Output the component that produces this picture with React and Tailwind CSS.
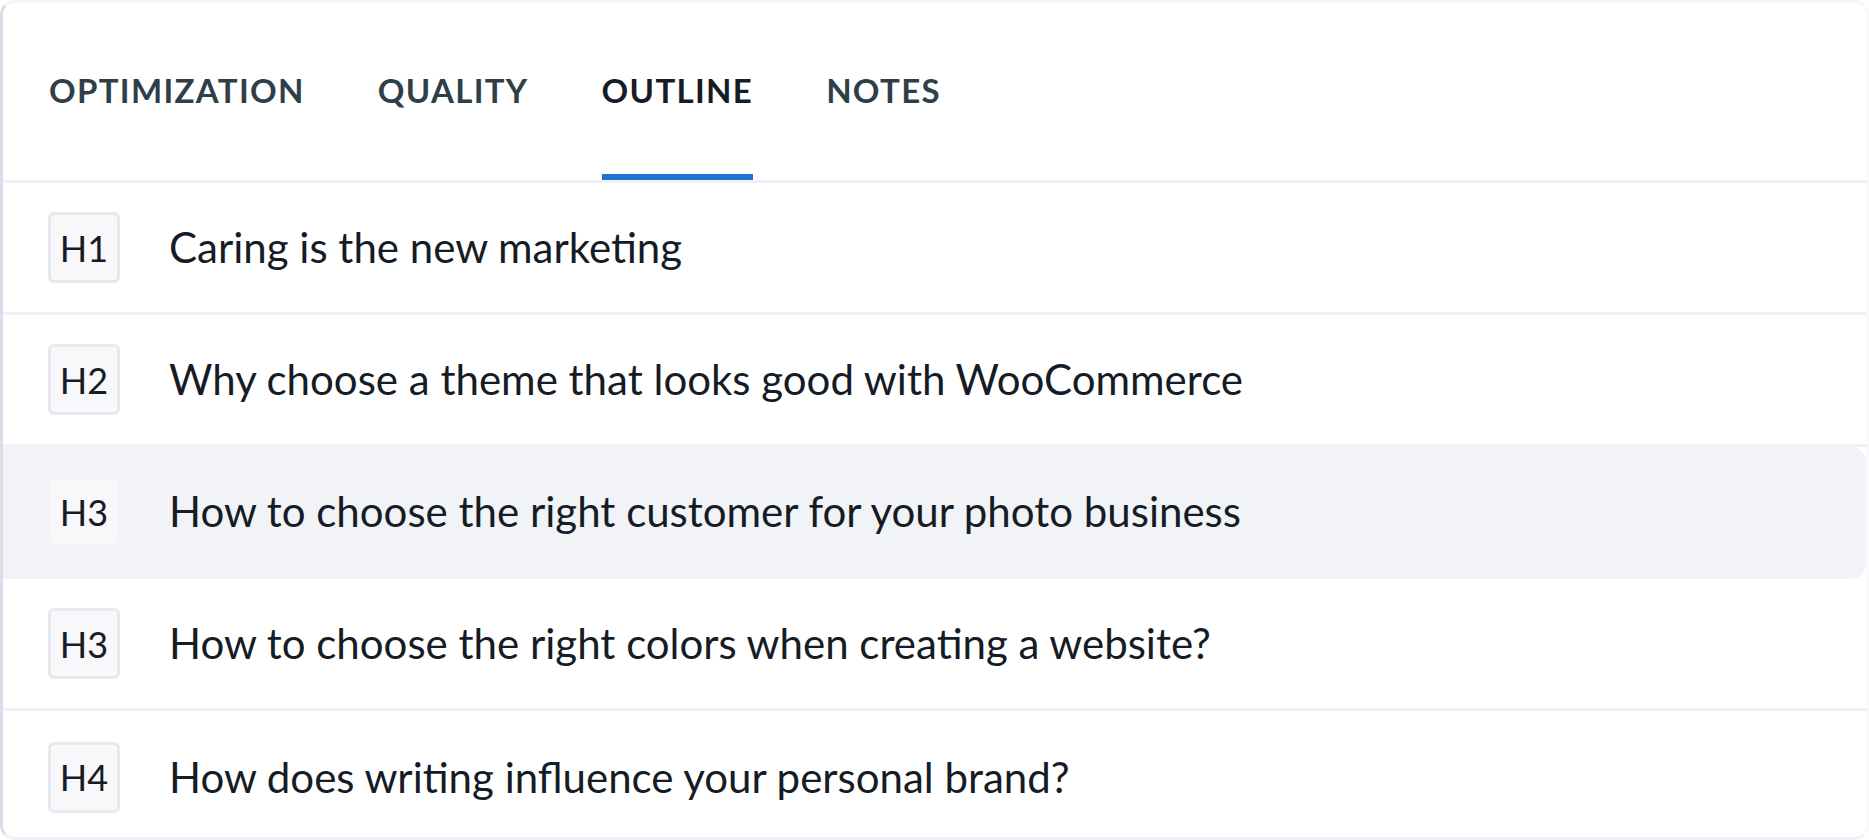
const tabs = ["OPTIMIZATION", "QUALITY", "OUTLINE", "NOTES"];

const headings = [
  { level: "H1", text: "Caring is the new marketing" },
  { level: "H2", text: "Why choose a theme that looks good with WooCommerce" },
  { level: "H3", text: "How to choose the right customer for your photo business", active: true },
  { level: "H3", text: "How to choose the right colors when creating a website?" },
  { level: "H4", text: "How does writing influence your personal brand?" },
];

const Tab = ({ label, selected }) => (
  <div
    className={`h-full flex items-center border-b-[6px] ${
      selected ? "border-[#1976d2] text-[#161b24]" : "border-transparent text-[#2f3f48]"
    }`}
  >
    <span className="pt-[4px] text-[33px] font-bold tracking-[0.04em]">{label}</span>
  </div>
);

const HeadingRow = ({ level, text, active }) => (
  <div
    className={`h-[132px] flex items-center pl-[45px] border-b-[3px] last:border-b-0 ${
      active ? "bg-[#f2f3f7] border-transparent rounded-r-[15px]" : "border-[#f0f0f5]"
    }`}
  >
    <div
      className={`w-[72px] h-[71px] shrink-0 flex items-center justify-center rounded-[6px] border-[3px] bg-[#f8f8fb] text-[36px] text-[#161b24] ${
        active ? "border-[#f2f3f7]" : "border-[#e8e8ef]"
      }`}
    >
      {level}
    </div>
    <p className="ml-[49px] text-[42px] text-[#161c26]">{text}</p>
  </div>
);

export default function App() {
  return (
    <div className="w-[1869px] h-[840px] bg-white" style={{ fontFamily: "Lato, 'Noto Sans', sans-serif" }}>
      <div className="h-full bg-white rounded-[15px] border-[3px] border-l-[#dcdde9] border-t-[#f6f6f9] border-r-[#fafafc] border-b-[#f0f0f5] overflow-hidden">
        <div className="h-[180px] flex gap-[73px] pl-[46px] border-b-[3px] border-[#f0f0f5]">
          {tabs.map((t) => (
            <Tab key={t} label={t} selected={t === "OUTLINE"} />
          ))}
        </div>
        {headings.map((h, i) => (
          <HeadingRow key={i} {...h} />
        ))}
      </div>
    </div>
  );
}
